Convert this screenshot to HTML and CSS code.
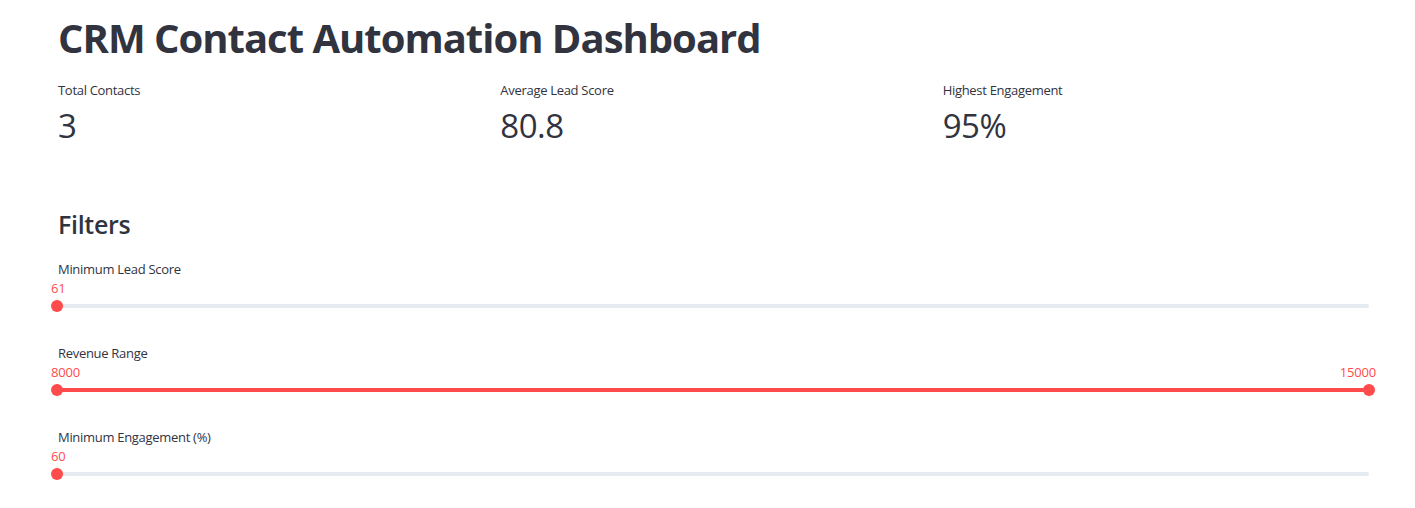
FILE: index.html
```html
<!DOCTYPE html>
<html>
<head>
<meta charset="utf-8">
<link rel="stylesheet" href="styles.css">
</head>
<body>
<main class="main">
  <h1 class="title">CRM Contact Automation Dashboard</h1>
  <section class="metrics">
    <div class="metric">
      <div class="metric-label">Total Contacts</div>
      <div class="metric-value">3</div>
    </div>
    <div class="metric">
      <div class="metric-label">Average Lead Score</div>
      <div class="metric-value">80.8</div>
    </div>
    <div class="metric">
      <div class="metric-label">Highest Engagement</div>
      <div class="metric-value">95%</div>
    </div>
  </section>
  <h2 class="subheader">Filters</h2>
  <section class="sliders">
    <div class="slider">
      <div class="slider-label">Minimum Lead Score</div>
      <div class="slider-values"><span class="val">61</span></div>
      <div class="track"><span class="thumb thumb-left"></span></div>
    </div>
    <div class="slider">
      <div class="slider-label">Revenue Range</div>
      <div class="slider-values"><span class="val">8000</span><span class="val val-right">15000</span></div>
      <div class="track track-full"><span class="thumb thumb-left"></span><span class="thumb thumb-right"></span></div>
    </div>
    <div class="slider">
      <div class="slider-label">Minimum Engagement (%)</div>
      <div class="slider-values"><span class="val">60</span></div>
      <div class="track"><span class="thumb thumb-left"></span></div>
    </div>
  </section>
</main>
</body>
</html>
```

FILE: styles.css
```css
html, body {
  margin: 0;
  padding: 0;
  background: #ffffff;
}
body {
  font-family: "Open Sans", "Noto Sans", sans-serif;
  color: rgb(49, 51, 63);
}
.main {
  width: 1311px;
  padding-left: 58px;
  padding-top: 12px;
}
.title {
  margin: 0;
  font-size: 40px;
  font-weight: 700;
  letter-spacing: -1px;
  line-height: 52px;
  height: 52px;
}
.metrics {
  display: grid;
  grid-template-columns: repeat(3, 1fr);
  gap: 16px;
  margin-top: 16px;
}
.metric-label {
  font-size: 13px;
  line-height: 20px;
  letter-spacing: -0.3px;
}
.metric-value {
  margin-top: 5px;
  font-size: 33px;
  line-height: 42px;
  font-weight: 400;
  letter-spacing: -0.5px;
}
.subheader {
  margin: 59px 0 0 0;
  font-size: 25px;
  font-weight: 600;
  line-height: 36px;
  letter-spacing: -0.3px;
}
.sliders {
  display: flex;
  flex-direction: column;
  gap: 30px;
  margin-top: 18px;
}
.slider {
  display: flex;
  flex-direction: column;
}
.slider-label {
  font-size: 13px;
  line-height: 18px;
  letter-spacing: -0.3px;
}
.slider-values {
  display: flex;
  justify-content: space-between;
  margin-left: -7px;
  margin-right: -7px;
  height: 20px;
  font-size: 13px;
  line-height: 20px;
  color: rgb(255, 75, 75);
  letter-spacing: -0.2px;
}
.track {
  position: relative;
  height: 4px;
  margin-left: -1px;
  margin-top: 6px;
  margin-bottom: 6px;
  border-radius: 2px;
  background: rgb(230, 234, 241);
}
.track-full {
  background: rgb(255, 75, 75);
}
.thumb {
  position: absolute;
  top: -4px;
  width: 12px;
  height: 12px;
  border-radius: 50%;
  background: rgb(255, 75, 75);
}
.thumb-left {
  left: -6px;
}
.thumb-right {
  right: -6px;
}
```
